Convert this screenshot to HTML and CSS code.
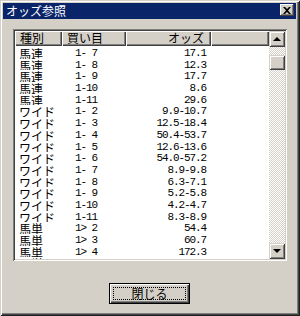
FILE: index.html
```html
<!doctype html>
<html lang="ja">
<head>
  <meta charset="utf-8">
  <title>オッズ参照</title>
  <link rel="stylesheet" href="styles.css">
</head>
<body>
  <div class="window">
    <div class="titlebar">
      <span class="title">オッズ参照</span>
      <button class="close" aria-label="close">
        <svg width="8" height="7" viewBox="0 0 8 7"><path d="M0 0h2l2 2 2-2h2L5 3.5 8 7H6L4 5 2 7H0l3-3.5z" fill="#000"/></svg>
      </button>
    </div>

    <div class="body">
      <div class="listbox">
        <div class="list-main">
          <div class="row head">
            <div class="hcell">種別</div>
            <div class="hcell">買い目</div>
            <div class="hcell right">オッズ</div>
            <div class="hcell fill"></div>
          </div>
          <div id="rows"></div>
        </div>
        <div class="scrollbar">
          <div class="sbtn"><span class="arrow up"></span></div>
          <div class="track"><div class="thumb"></div></div>
          <div class="sbtn"><span class="arrow down"></span></div>
        </div>
      </div>

      <div class="actions">
        <button class="btn"><span class="focus">閉じる</span></button>
      </div>
    </div>
  </div>

  <script>
    var data = [
      ["馬連", "1- 7", "17.1"],
      ["馬連", "1- 8", "12.3"],
      ["馬連", "1- 9", "17.7"],
      ["馬連", "1-10", "8.6"],
      ["馬連", "1-11", "29.6"],
      ["ワイド", "1- 2", "9.9-10.7"],
      ["ワイド", "1- 3", "12.5-18.4"],
      ["ワイド", "1- 4", "50.4-53.7"],
      ["ワイド", "1- 5", "12.6-13.6"],
      ["ワイド", "1- 6", "54.0-57.2"],
      ["ワイド", "1- 7", "8.9-9.8"],
      ["ワイド", "1- 8", "6.3-7.1"],
      ["ワイド", "1- 9", "5.2-5.8"],
      ["ワイド", "1-10", "4.2-4.7"],
      ["ワイド", "1-11", "8.3-8.9"],
      ["馬単", "1> 2", "54.4"],
      ["馬単", "1> 3", "60.7"],
      ["馬単", "1> 4", "172.3"],
      ["馬単", "", ""]
    ];

    var rows = document.getElementById("rows");
    data.forEach(function (d) {
      var row = document.createElement("div");
      row.className = "row";
      row.innerHTML =
        '<div class="cell kind">' + d[0] + '</div>' +
        '<div class="cell num buy">' + d[1] + '</div>' +
        '<div class="cell num odds">' + d[2] + '</div>';
      rows.appendChild(row);
    });
  </script>
</body>
</html>
```

FILE: styles.css
```css
html,
body {
  margin: 0;
  height: 100%;
}

body {
  background: #d4d0c8;
  font-family: "Noto Sans CJK JP", "Liberation Sans", sans-serif;
  font-size: 12px;
  color: #000;
}

.window {
  box-sizing: border-box;
  width: 300px;
  height: 316px;
  padding: 3px 4px 4px 3px;
  background: #d4d0c8;
  box-shadow:
    inset 1px 1px #d4d0c8,
    inset -1px -1px #202020,
    inset 2px 2px #fff,
    inset -2px -2px #404040,
    inset -3px -3px #808080;
}

.titlebar {
  display: flex;
  justify-content: space-between;
  align-items: flex-start;
  height: 16px;
  background: #0a246a;
  color: #fff;
}

.title {
  padding-left: 3px;
  line-height: 16px;
}

.close {
  box-sizing: border-box;
  width: 14px;
  height: 12px;
  margin: 1px 2px 0 0;
  padding: 0;
  border: none;
  background: #d4d0c8;
  display: flex;
  align-items: center;
  justify-content: center;
  box-shadow:
    inset -1px -1px #404040,
    inset 1px 1px #fff,
    inset -2px -2px #808080;
}

.body {
  padding-top: 10px;
}

.listbox {
  box-sizing: border-box;
  display: flex;
  height: 232px;
  margin: 0 9px 0 10px;
  padding: 2px;
  background: #fff;
  box-shadow:
    inset 1px 1px #808080,
    inset -1px -1px #fff,
    inset 2px 2px #404040,
    inset -2px -2px #d4d0c8;
}

.list-main {
  flex: 1;
  overflow: hidden;
}

.row {
  display: grid;
  grid-template-columns: 47px 64px 85px;
  height: 11.7px;
  line-height: 11.7px;
  white-space: pre;
}

.row.head {
  grid-template-columns: 47px 64px 85px 1fr;
  height: 15px;
  line-height: 14px;
  margin-bottom: 1px;
}

.hcell {
  box-sizing: border-box;
  height: 15px;
  padding: 0 0 0 5px;
  background: #d4d0c8;
  box-shadow:
    inset 1px 1px #fff,
    inset -1px -1px #404040,
    inset -2px -2px #808080;
}

.hcell.right {
  text-align: right;
  padding: 0 7px 0 0;
}

.cell {
  overflow: hidden;
}

.kind {
  padding-left: 4px;
  padding-top: 1px;
}

.num {
  font-family: "Liberation Mono", monospace;
  font-size: 11px;
  letter-spacing: -1.1px;
  padding-top: 1px;
}

.buy {
  padding-left: 13px;
}

.odds {
  text-align: right;
  padding-right: 5px;
}

.scrollbar {
  display: flex;
  flex-direction: column;
  width: 16px;
}

.sbtn {
  box-sizing: border-box;
  height: 16px;
  display: flex;
  align-items: center;
  justify-content: center;
  background: #d4d0c8;
  box-shadow:
    inset 1px 1px #d4d0c8,
    inset -1px -1px #404040,
    inset 2px 2px #fff,
    inset -2px -2px #808080;
}

.arrow {
  width: 0;
  height: 0;
  border-left: 4px solid transparent;
  border-right: 4px solid transparent;
}

.arrow.up {
  border-bottom: 4px solid #000;
}

.arrow.down {
  border-top: 4px solid #000;
}

.track {
  flex: 1;
  background: repeating-conic-gradient(#d4d0c8 0 25%, #fff 0 50%) 0 0 / 2px 2px;
}

.thumb {
  box-sizing: border-box;
  height: 15px;
  margin-top: 8px;
  background: #d4d0c8;
  box-shadow:
    inset 1px 1px #d4d0c8,
    inset -1px -1px #404040,
    inset 2px 2px #fff,
    inset -2px -2px #808080;
}

.actions {
  display: flex;
  justify-content: center;
  padding-top: 22px;
}

.btn {
  box-sizing: border-box;
  width: 81px;
  height: 21px;
  padding: 4px;
  border: 1px solid #000;
  background: #d4d0c8;
  font-family: "Noto Sans CJK JP", sans-serif;
  font-size: 12px;
  color: #000;
  box-shadow:
    inset 1px 1px #fff,
    inset -1px -1px #404040,
    inset -2px -2px #808080;
}

.focus {
  display: block;
  height: 11px;
  line-height: 11px;
  outline: 1px dotted #000;
}
```
